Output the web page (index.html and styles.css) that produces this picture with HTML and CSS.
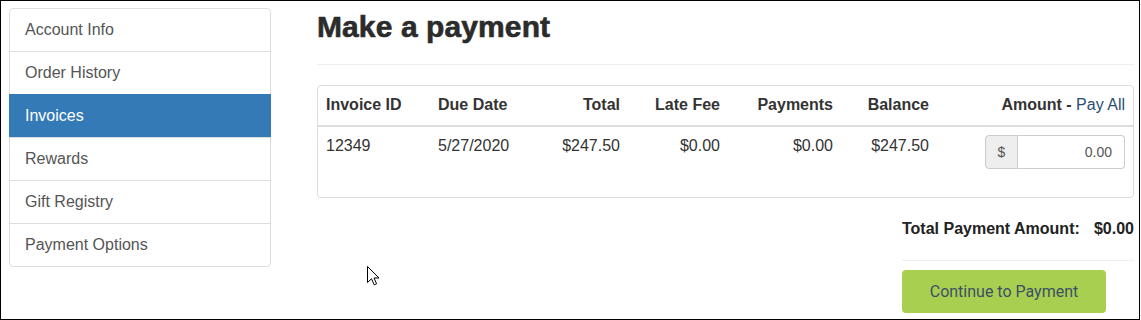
FILE: index.html
```html
<!DOCTYPE html>
<html>
<head>
<meta charset="utf-8">
<link rel="stylesheet" href="styles.css">
</head>
<body>
<div class="frame">
  <nav class="list-group">
    <a class="list-item">Account Info</a>
    <a class="list-item">Order History</a>
    <a class="list-item active">Invoices</a>
    <a class="list-item">Rewards</a>
    <a class="list-item">Gift Registry</a>
    <a class="list-item">Payment Options</a>
  </nav>
  <main class="main">
    <div class="page-header"><h1>Make a payment</h1></div>
    <div class="panel">
      <table class="table">
        <colgroup>
          <col class="c1"><col class="c2"><col class="c3"><col class="c4"><col class="c5"><col class="c6"><col class="c7">
        </colgroup>
        <thead>
          <tr>
            <th>Invoice ID</th>
            <th>Due Date</th>
            <th class="r">Total</th>
            <th class="r">Late Fee</th>
            <th class="r">Payments</th>
            <th class="r">Balance</th>
            <th class="r">Amount - <a class="link">Pay All</a></th>
          </tr>
        </thead>
        <tbody>
          <tr>
            <td>12349</td>
            <td>5/27/2020</td>
            <td class="r">$247.50</td>
            <td class="r">$0.00</td>
            <td class="r">$0.00</td>
            <td class="r">$247.50</td>
            <td class="r">
              <div class="input-group">
                <span class="addon">$</span>
                <span class="input">0.00</span>
              </div>
            </td>
          </tr>
        </tbody>
      </table>
    </div>
    <div class="summary">
      <div class="total"><span>Total Payment Amount:</span><span>$0.00</span></div>
      <hr class="rule">
      <button class="btn">Continue to Payment</button>
    </div>
  </main>
  <svg class="cursor" width="13" height="20" viewBox="0 0 13 20"><path d="M0.5 0.5 L0.5 16.5 L4.5 12.8 L7.2 18.8 L9.6 17.8 L7 12 L12 12 Z" fill="#fff" stroke="#000" stroke-width="1"/></svg>
</div>
</body>
</html>
```

FILE: styles.css
```css
* { box-sizing: border-box; }
html, body { margin: 0; padding: 0; background: #fff; }
body {
  font-family: "Liberation Sans", Arial, sans-serif;
  font-size: 16px;
  line-height: 1.42857;
  color: #333;
}
.frame {
  position: relative;
  width: 1140px;
  height: 320px;
  border: 1px solid #000;
  display: flex;
  align-items: flex-start;
  padding: 7px 6px 0 8px;
  overflow: hidden;
}
.list-group {
  width: 262px;
  flex: none;
  display: flex;
  flex-direction: column;
}
.list-item {
  display: block;
  padding: 10px 15px;
  line-height: 22px;
  border: 1px solid #ddd;
  margin-bottom: -1px;
  color: #555;
  background: #fff;
  text-decoration: none;
}
.list-item:first-child { border-top-left-radius: 4px; border-top-right-radius: 4px; }
.list-item:last-child { border-bottom-left-radius: 4px; border-bottom-right-radius: 4px; margin-bottom: 0; }
.list-item.active { background: #337ab7; border-color: #337ab7; color: #fff; }
.main {
  margin-left: 46px;
  width: 817px;
  margin-top: -7px;
}
.page-header {
  padding: 9px 0 21px;
  border-bottom: 1px solid #eee;
}
h1 {
  margin: 0;
  font-size: 30px;
  line-height: 33px;
  font-weight: 700;
  color: #2b2b2b;
  -webkit-text-stroke: 0.6px #2b2b2b;
  letter-spacing: 0.1px;
}
.panel {
  margin-top: 20px;
  border: 1px solid #ddd;
  border-radius: 4px;
  padding-bottom: 20px;
}
.table {
  width: 100%;
  table-layout: fixed;
  border-collapse: collapse;
}
.c1 { width: 112px; }
.c2 { width: 100px; }
.c3 { width: 98px; }
.c4 { width: 100px; }
.c5 { width: 113px; }
.c6 { width: 96px; }
.c7 { width: 196px; }
th, td {
  padding: 8px;
  text-align: left;
  vertical-align: top;
  white-space: nowrap;
}
th { font-weight: 700; border-bottom: 2px solid #ddd; color: #333; }
td { color: #333; }
.r { text-align: right; }
.link { font-weight: 400; color: #2a4d72; }
.input-group {
  display: inline-flex;
  width: 140px;
  height: 34px;
  vertical-align: top;
  font-size: 14px;
}
.addon {
  width: 33px;
  flex: none;
  padding: 6px 0;
  text-align: center;
  line-height: 20px;
  background: #eee;
  border: 1px solid #ccc;
  border-radius: 4px 0 0 4px;
  color: #555;
}
.input {
  flex: 1;
  padding: 6px 12px;
  line-height: 20px;
  text-align: right;
  border: 1px solid #ccc;
  border-left: 0;
  border-radius: 0 4px 4px 0;
  color: #555;
}
.summary {
  margin-left: auto;
  width: 232px;
  margin-top: 20px;
}
.total {
  display: flex;
  justify-content: space-between;
  font-weight: 700;
  color: #222;
}
.rule {
  margin: 19px 0 9px;
  border: 0;
  border-top: 1px solid #eee;
}
.btn {
  display: block;
  width: 204px;
  height: 43px;
  border: 0;
  border-radius: 4px;
  background: #a9cf51;
  color: #3b4f66;
  font-family: Roboto, "Liberation Sans", sans-serif;
  font-size: 16px;
  padding: 0;
}
.cursor {
  position: absolute;
  left: 366px;
  top: 265px;
}
```
